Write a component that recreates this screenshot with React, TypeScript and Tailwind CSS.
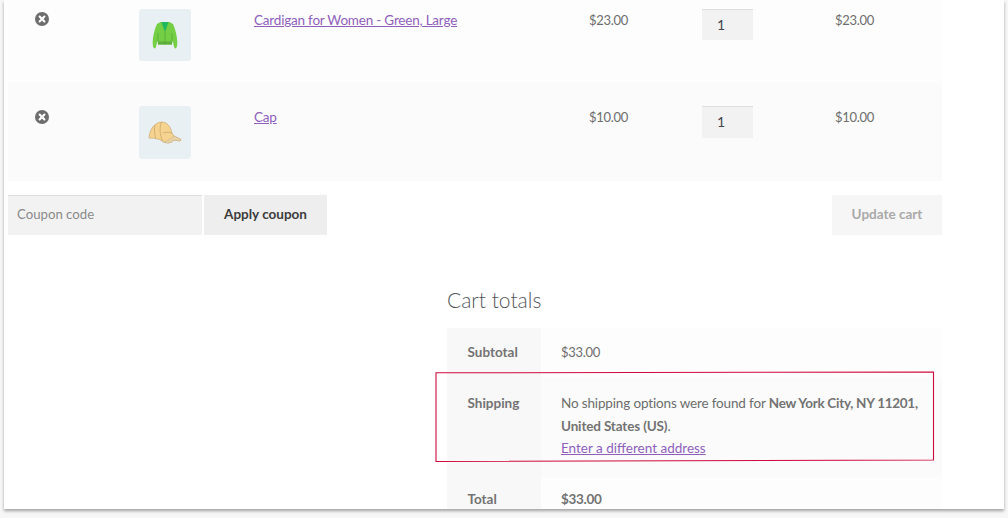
const font = { fontFamily: '"Lato", "Liberation Sans", sans-serif' };

function RemoveIcon() {
  return (
    <svg width="14" height="14" viewBox="0 0 14 14" className="block">
      <circle cx="7" cy="7" r="7" fill="#6d6d6d" />
      <path d="M4.6 4.6 9.4 9.4M9.4 4.6 4.6 9.4" stroke="#fff" strokeWidth="2.1" strokeLinecap="round" />
    </svg>
  );
}

function Cardigan() {
  return (
    <svg width="52" height="52" viewBox="0 0 52 52" className="block">
      <path d="M21.5 13 L30.5 13 L34 15 C36 19 38.3 27 38.3 34 C38.3 37 37.4 39.5 36.5 39.5 C35.5 39.5 35 38 34.5 35.5 L33.5 31.5 L33 35.5 L19 35.5 L18.5 31.5 L17.5 35.5 C17 38 16.5 39.5 15.5 39.5 C14.6 39.5 13.7 37 13.7 34 C13.7 27 16 19 18 15 Z" fill="#74cf45" />
      <path d="M22.5 13 L29.5 13 L26.5 22 L25.5 22 Z" fill="#1fb85c" />
      <path d="M19 32.5 L33 32.5 L33 35.5 L19 35.5 Z" fill="#5fae3c" />
      <path d="M19 24 L19 32.5M33 24 L33 32.5M26 22 L26 35.5" stroke="#55a437" strokeWidth="0.7" />
    </svg>
  );
}

function CapImage() {
  return (
    <svg width="52" height="53" viewBox="0 0 52 53" className="block">
      <path d="M10 32 C10.5 23 16 16.5 22.5 16 C28 16 31.5 20 33 27 L35 30 L42 33.5 L41 35 L35 34 C32 37.5 27 37.5 24 35.5 C20 32.5 14 32 10 32 Z" fill="#f6d48f" stroke="#c9a873" strokeWidth="0.7" />
      <path d="M22.5 16 C20.5 21 20.5 28 23.5 35M16 19 C15 23 15.5 27 16.5 32M24 27 C27 26 30 26 33 27" fill="none" stroke="#b99a66" strokeWidth="0.6" />
      <path d="M24.5 36 C28 35 31.5 33 35 30 L42 33.5 L41 35 L35 34 C32 37.5 28 37.5 24.5 36 Z" fill="#e9d3a6" stroke="#b9a27a" strokeWidth="0.6" strokeDasharray="1 0.6" />
    </svg>
  );
}

function Row({ tall, bg, img, name, price, total }: { tall?: boolean; bg: string; img: React.ReactNode; name: string; price: string; total: string }) {
  return (
    <div className={`grid grid-cols-[131px_115px_335px_113px_133px_1fr] ${bg} ${tall ? "h-[98px] pt-[23px]" : "h-[83px] pt-[9px]"}`}>
      <div className={tall ? "pl-[27px] pt-[4px]" : "pl-[27px] pt-[3px]"}><RemoveIcon /></div>
      <div><div className="w-[52px] rounded-[3px] bg-[#e9f0f4]">{img}</div></div>
      <div className="text-[13.5px] leading-[22px] tracking-[-0.2px]"><a className="text-[#8f5fbb] underline">{name}</a></div>
      <div className="text-[13px] leading-[22px] tracking-[-0.3px]">{price}</div>
      <div>
        <input readOnly value="1" className={`block w-[51px] ${tall ? "h-[32px]" : "h-[31px]"} bg-[#f2f2f2] border-t border-[#dedede] pl-[15px] pb-[2px] text-[14px] text-[#43454b] outline-none`} />
      </div>
      <div className="text-[13px] leading-[22px] tracking-[-0.3px]">{total}</div>
    </div>
  );
}

export default function App() {
  return (
    <div style={font} className="relative w-[1008px] h-[518px] overflow-hidden bg-[#f7f7f7] text-[#6d6d6d]">
      <div className="ml-[4px] w-[1000px] h-[509px] bg-white shadow-[0_2px_3px_rgba(0,0,0,0.35)] overflow-hidden">
        <div className="ml-[4px] w-[934px]">
          <Row bg="bg-[#fdfdfd]" img={<Cardigan />} name="Cardigan for Women - Green, Large" price="$23.00" total="$23.00" />
          <Row tall bg="bg-[#fbfbfb]" img={<CapImage />} name="Cap" price="$10.00" total="$10.00" />
          <div className="mt-[14px] flex h-[40px]">
            <input placeholder="Coupon code" className="w-[194px] h-[40px] bg-[#f2f2f2] border-t border-[#dedede] pl-[9px] pb-[3px] text-[13.2px] outline-none placeholder:text-[#8a8a8a]" />
            <button className="ml-[2px] w-[123px] h-[40px] pb-[2px] bg-[#eeeeee] text-[#3c3c3c] font-bold text-[13.5px]">Apply coupon</button>
            <button className="ml-auto w-[110px] h-[40px] pb-[2px] bg-[#f6f6f6] text-[#a9a9a9] font-bold text-[13.5px]">Update cart</button>
          </div>
          <div className="ml-[439px] mt-[50px]">
            <h2 className="text-[21px] leading-[30px] font-light text-[#53555a]">Cart totals</h2>
            <div className="mt-[13px] w-[495px] text-[13.5px]">
              <div className="flex h-[49px]">
                <div className="w-[94px] bg-[#f8f8f8] pl-[20.5px] pt-[13px] font-bold leading-[22px] text-[#737373]">Subtotal</div>
                <div className="flex-1 bg-[#fdfdfd] pl-[20px] pt-[13px] leading-[22px] text-[13px] tracking-[-0.3px]">$33.00</div>
              </div>
              <div className="flex h-[100px]">
                <div className="w-[94px] bg-[#f8f8f8] pl-[20.5px] pt-[15px] font-bold leading-[22px] text-[#737373]">Shipping</div>
                <div className="flex-1 bg-[#fbfbfb] pl-[20px] pt-[15px] leading-[22.5px]">
                  <p className="whitespace-nowrap tracking-[-0.15px]">No shipping options were found for <b className="tracking-[-0.28px] text-[#737373]">New York City, NY 11201,</b></p>
                  <p className="tracking-[-0.15px]"><b className="text-[#737373]">United States (US)</b>.</p>
                  <a className="text-[#8f5fbb] underline block">Enter a different address</a>
                </div>
              </div>
              <div className="flex h-[50px]">
                <div className="w-[94px] bg-[#f8f8f8] pl-[20.5px] pt-[11px] font-bold leading-[22px] text-[#737373]">Total</div>
                <div className="flex-1 bg-[#fdfdfd] pl-[20px] pt-[11px] font-bold leading-[22px] tracking-[-0.3px] text-[#737373]">$33.00</div>
              </div>
            </div>
          </div>
        </div>
      </div>
      <svg width="1008" height="518" viewBox="0 0 1008 518" className="absolute left-0 top-0 pointer-events-none">
        <path d="M436 372.8 L933.5 372 L933.5 460 L436 461.5 Z" fill="none" stroke="#cf0a3c" strokeWidth="1.1" />
      </svg>
    </div>
  );
}
